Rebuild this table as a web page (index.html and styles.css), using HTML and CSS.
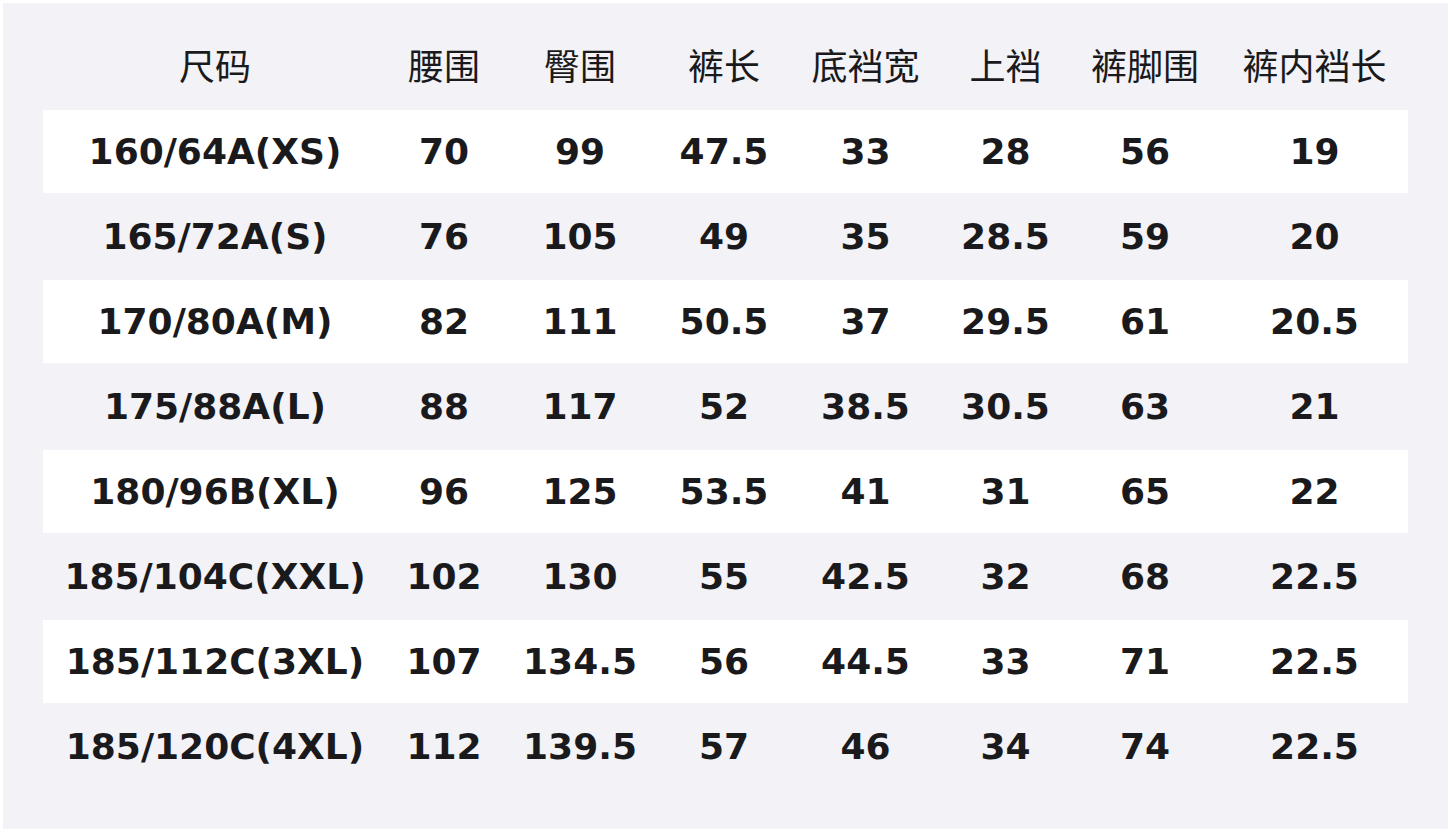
FILE: index.html
```html
<!DOCTYPE html>
<html lang="zh">
<head>
<meta charset="utf-8">
<title>尺码表</title>
<link rel="stylesheet" href="styles.css">
</head>
<body>
<div class="panel">
  <table class="size-table">
    <colgroup>
      <col class="c1"><col class="c2"><col class="c3"><col class="c4"><col class="c5"><col class="c6"><col class="c7"><col class="c8">
    </colgroup>
    <thead>
      <tr><th>尺码</th><th>腰围</th><th>臀围</th><th>裤长</th><th>底裆宽</th><th>上裆</th><th>裤脚围</th><th>裤内裆长</th></tr>
    </thead>
    <tbody>
      <tr><td>160/64A(XS)</td><td>70</td><td>99</td><td>47.5</td><td>33</td><td>28</td><td>56</td><td>19</td></tr>
      <tr><td>165/72A(S)</td><td>76</td><td>105</td><td>49</td><td>35</td><td>28.5</td><td>59</td><td>20</td></tr>
      <tr><td>170/80A(M)</td><td>82</td><td>111</td><td>50.5</td><td>37</td><td>29.5</td><td>61</td><td>20.5</td></tr>
      <tr><td>175/88A(L)</td><td>88</td><td>117</td><td>52</td><td>38.5</td><td>30.5</td><td>63</td><td>21</td></tr>
      <tr><td>180/96B(XL)</td><td>96</td><td>125</td><td>53.5</td><td>41</td><td>31</td><td>65</td><td>22</td></tr>
      <tr><td>185/104C(XXL)</td><td>102</td><td>130</td><td>55</td><td>42.5</td><td>32</td><td>68</td><td>22.5</td></tr>
      <tr><td>185/112C(3XL)</td><td>107</td><td>134.5</td><td>56</td><td>44.5</td><td>33</td><td>71</td><td>22.5</td></tr>
      <tr><td>185/120C(4XL)</td><td>112</td><td>139.5</td><td>57</td><td>46</td><td>34</td><td>74</td><td>22.5</td></tr>
    </tbody>
  </table>
</div>
</body>
</html>
```

FILE: styles.css
```css
html, body {
  margin: 0;
  padding: 0;
  background: #ffffff;
}

body {
  font-family: "DejaVu Sans", "Noto Sans CJK SC", sans-serif;
  color: #1a1a1c;
}

.panel {
  margin: 3px;
  width: 1445px;
  height: 826px;
  box-sizing: border-box;
  padding: 22px 40px 40px 40px;
  background: #f2f2f7;
}

.size-table {
  width: 1365px;
  table-layout: fixed;
  border-collapse: separate;
  border-spacing: 0;
}

.c1 { width: 344px; }
.c2 { width: 114px; }
.c3 { width: 158px; }
.c4 { width: 130px; }
.c5 { width: 153px; }
.c6 { width: 127px; }
.c7 { width: 152px; }
.c8 { width: 187px; }

.size-table th {
  height: 78px;
  padding: 0 0 6px 0;
  font-family: "Noto Sans CJK SC", "DejaVu Sans", sans-serif;
  font-weight: 400;
  font-size: 36px;
  text-align: center;
  vertical-align: middle;
  white-space: nowrap;
}

.size-table td {
  height: 83px;
  padding: 0;
  border-top: 1px solid #f2f2f7;
  border-bottom: 1px solid #f2f2f7;
  font-weight: 700;
  font-size: 36px;
  text-align: center;
  vertical-align: middle;
  white-space: nowrap;
  line-height: 1;
}

.size-table tbody tr:nth-child(odd) td {
  background: #ffffff;
}
```
